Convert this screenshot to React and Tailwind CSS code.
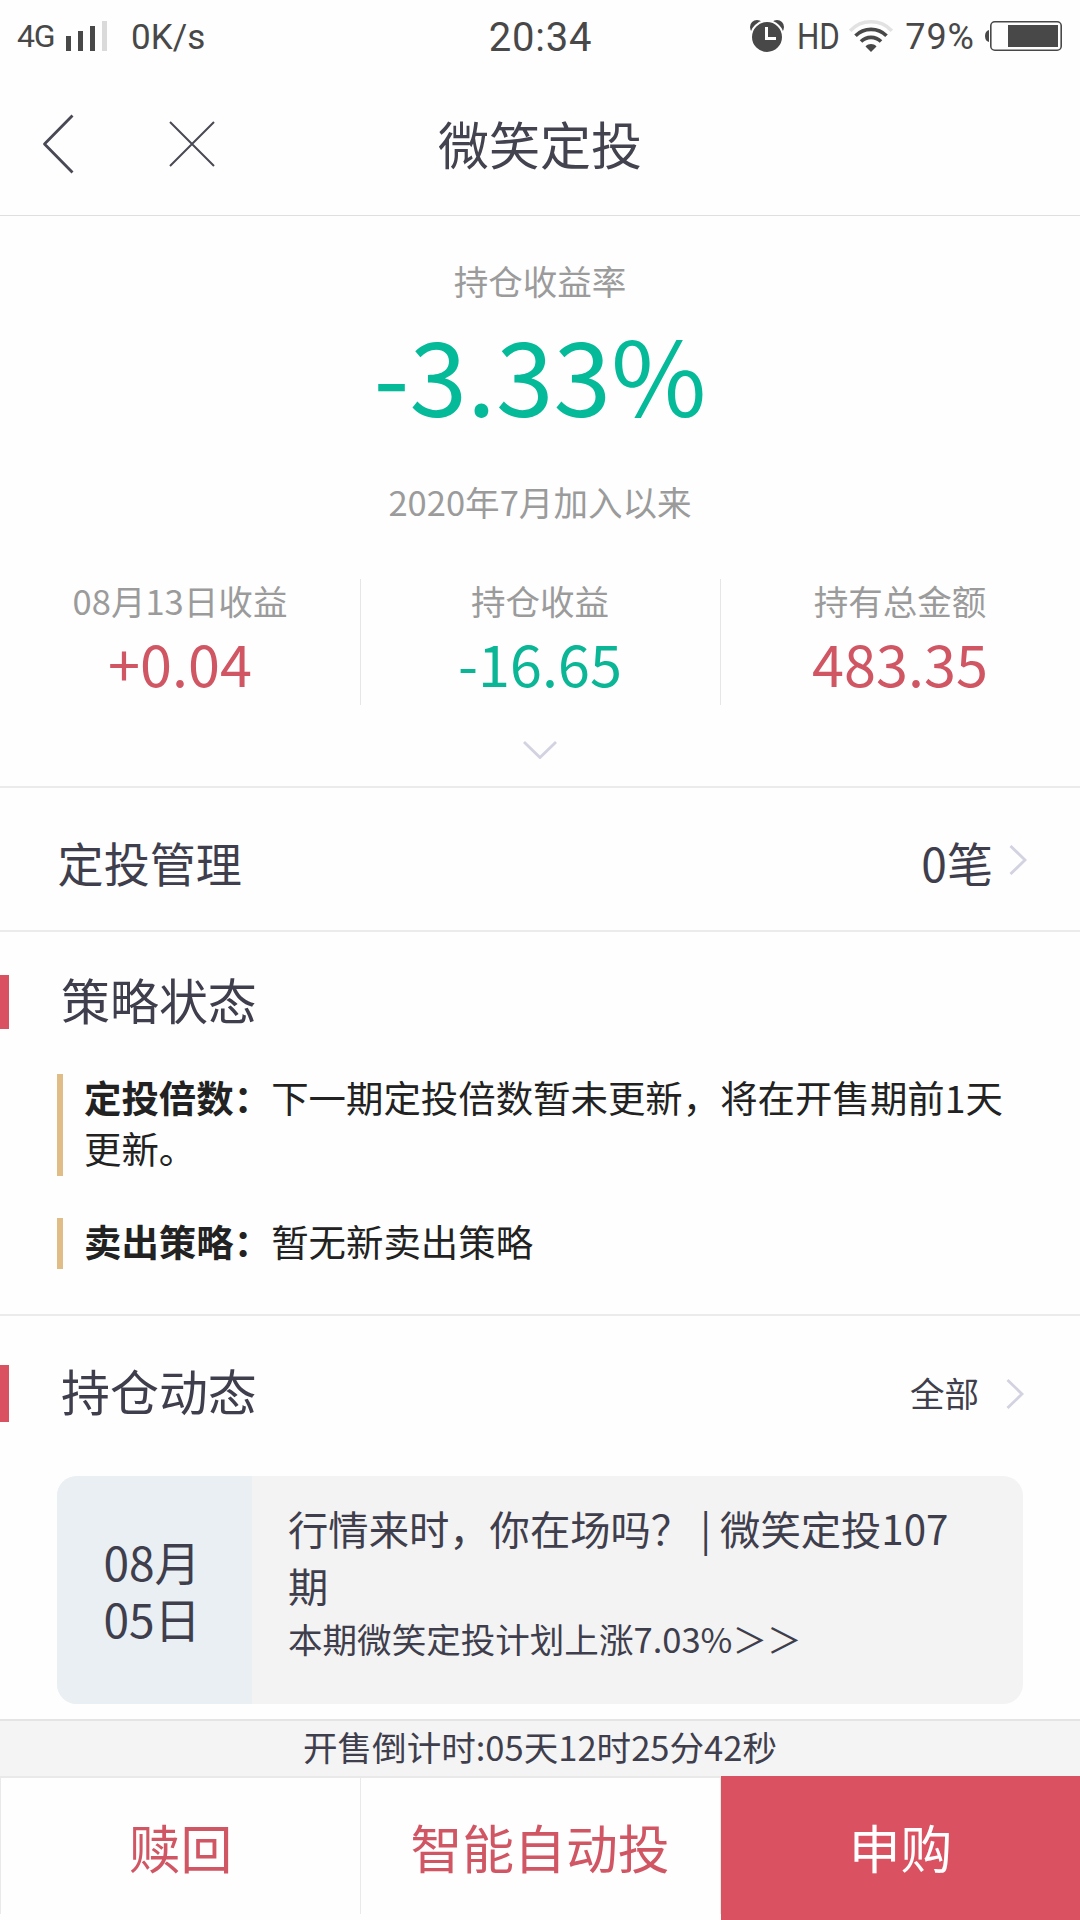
import React from 'react';

const stats = [
  { label: '08月13日收益', value: '+0.04', color: 'text-[#d15664]' },
  { label: '持仓收益', value: '-16.65', color: 'text-[#0ab696]' },
  { label: '持有总金额', value: '483.35', color: 'text-[#d15664]' },
];

const strategies = [
  { name: '定投倍数：', text: '下一期定投倍数暂未更新，将在开售期前1天更新。' },
  { name: '卖出策略：', text: '暂无新卖出策略' },
];

function AlarmIcon() {
  return (
    <svg width="34" height="32" viewBox="0 0 34 32" fill="none">
      <circle cx="7" cy="7" r="7" fill="#484848" />
      <circle cx="27" cy="7" r="7" fill="#484848" />
      <circle cx="17" cy="17" r="16" fill="#484848" stroke="#fefefe" strokeWidth="2" />
      <path d="M16.500 7V18.500H26" stroke="#fff" strokeWidth="3" />
    </svg>
  );
}

function WifiIcon() {
  return (
    <svg width="44" height="32" viewBox="0 0 44 32" fill="none" strokeWidth="3.600">
      <path d="M1.200 10.800C12.500 -1.200 31.500 -1.200 42.800 10.800" stroke="#e2e2e2" />
      <path d="M6.500 15.800C15 7.200 29 7.200 37.500 15.800" stroke="#484848" />
      <path d="M12 21.600C17.500 16 26.500 16 32 21.600" stroke="#484848" />
      <path d="M16.500 26.500C19.500 23.300 24.500 23.300 27.500 26.500L22 32Z" fill="#484848" />
    </svg>
  );
}

function BatteryIcon() {
  return (
    <svg width="77" height="30" viewBox="0 0 77 30" fill="none">
      <path d="M4 9V21C1.500 20.500 0 18.500 0 15C0 11.500 1.500 9.500 4 9Z" fill="#484848" />
      <rect x="5.800" y="0.800" width="70.400" height="28.400" rx="4" stroke="#484848" strokeWidth="1.600" />
      <rect x="23" y="4" width="50" height="22" fill="#484848" />
    </svg>
  );
}

function SignalIcon() {
  return (
    <div className="flex items-end gap-[7px] h-[30px] mb-0.5">
      <div className="w-[5px] h-[15px] bg-[#484848]" />
      <div className="w-[5px] h-5 bg-[#484848]" />
      <div className="w-[5px] h-[25px] bg-[#484848]" />
      <div className="w-[5px] h-[30px] bg-[#dadada]" />
    </div>
  );
}

function ChevronRight() {
  return (
    <svg width="18" height="30" viewBox="0 0 18 30" fill="none" stroke="#d2d2e0" strokeWidth="2.800">
      <path d="M1.500 1L16 15L1.500 29" />
    </svg>
  );
}

function StatusBar() {
  return (
    <div className="grid grid-cols-[1fr_auto_1fr] items-center h-[74px] shrink-0 text-[#484848] font-[Roboto,sans-serif] leading-none">
      <div className="flex items-center pl-[17px]">
        <span className="text-[32px] tracking-[-1.2px] w-[49px] pb-0.5">4G</span>
        <SignalIcon />
        <span className="text-[35px] ml-6 tracking-[0.1px] pt-px">0K/s</span>
      </div>
      <span className="text-[40px] tracking-[0.8px] pt-0.5 pl-px">20:34</span>
      <div className="flex items-center justify-end pr-[18px]">
        <div className="mb-0.5"><AlarmIcon /></div>
        <span className="text-[36px] ml-[13px] w-[44px] origin-left scale-x-[0.87]">HD</span>
        <div className="ml-2 mb-0.5"><WifiIcon /></div>
        <span className="text-[36px] tracking-[1px] ml-3 mr-2.5">79%</span>
        <div className="mb-0.5"><BatteryIcon /></div>
      </div>
    </div>
  );
}

function NavBar() {
  return (
    <div className="grid grid-cols-[1fr_auto_1fr] items-center h-[142px] shrink-0 pb-px border-b border-[#dfdfdf]">
      <div className="flex items-center pl-[42px]">
        <svg width="32" height="60" viewBox="0 0 32 60" fill="none" stroke="#494955" strokeWidth="2.800" strokeLinejoin="round">
          <path d="M30.500 1.500L2.500 30L30.500 58.500" />
        </svg>
        <svg className="ml-[95px]" width="46" height="46" viewBox="0 0 46 46" fill="none" stroke="#494955" strokeWidth="2">
          <path d="M1 1L45 45M45 1L1 45" />
        </svg>
      </div>
      <h1 className="pb-0.5 text-[51px] leading-[60px] text-[#43434f]">微笑定投</h1>
    </div>
  );
}

export default function App() {
  return (
    <div className="flex flex-col w-[1080px] h-[1920px] overflow-hidden bg-[#fefefe] text-[#3f3e4d] font-['Noto_Sans_CJK_SC',sans-serif]">
      <StatusBar />
      <NavBar />

      <main className="flex-1 min-h-0">
        <section className="flex flex-col items-center h-[570px] pt-[42px]">
          <div className="text-[34.56px] leading-[44px] text-[#9b9b9b]">持仓收益率</div>
          <div className="mt-2.5 text-[103.68px] leading-[120px] text-[#04ba99]">-3.33%</div>
          <div className="mt-[47px] text-[34.56px] leading-[44px] text-[#9b9b9b]">2020年7月加入以来</div>
          <div className="mt-14 grid grid-cols-[360px_360px_360px] w-full h-[126px]">
            {stats.map((s, i) => (
              <div key={s.label} className={`text-center ${i < 2 ? 'border-r border-[#e6e6e6] -mr-px' : ''}`}>
                <div className="text-[34.56px] leading-[42px] text-[#9b9b9b]">{s.label}</div>
                <div className="mt-1.5">
                  <div className={`text-[57.6px] leading-[70px] ${s.color}`}>{s.value}</div>
                </div>
              </div>
            ))}
          </div>
          <svg className="mt-[36px]" width="34" height="18" viewBox="0 0 34 18" fill="none" stroke="#d2d2e0" strokeWidth="2.800">
            <path d="M1 1L17 16.500L33 1" />
          </svg>
        </section>

        <section className="flex items-center justify-between h-[144px] pl-[57.6px] pr-[53px] border-t-2 border-[#ebebeb]">
          <span className="pt-1.5 text-[46.08px] leading-[60px]">定投管理</span>
          <div className="flex items-center gap-4">
            <span className="pt-1.5 text-[46.08px] leading-[60px]">0笔</span>
            <div className="pt-0.5"><ChevronRight /></div>
          </div>
        </section>

        <section className="h-[384px] pt-[43px] border-t-2 border-[#ebebeb]">
          <div className="flex h-[54px]">
            <div className="w-[9px] bg-[#da5261]" />
            <h2 className="ml-[52px] text-[48.96px] leading-[48px]">策略状态</h2>
          </div>
          <div className="flex flex-col gap-[42px] mt-[45px] pl-[57px] pr-[60px] text-[37.44px] leading-[51px] text-[#222]">
            {strategies.map(s => (
              <div key={s.name} className="flex">
                <div className="w-1.5 shrink-0 bg-[#e0bc86]" />
                <p className="ml-[21px] -mt-0.5 mb-0.5">
                  <b className="font-bold">{s.name}</b>{s.text}
                </p>
              </div>
            ))}
          </div>
        </section>

        <section className="pt-[49px] border-t-2 border-[#ebebeb]">
          <div className="flex h-[57px] pr-[56px]">
            <div className="w-[9px] bg-[#da5261]" />
            <h2 className="ml-[52px] text-[48.96px] leading-[49px]">持仓动态</h2>
            <div className="flex items-center gap-[27px] ml-auto">
              <span className="pb-[3px] text-[34.56px] leading-[44px]">全部</span>
              <ChevronRight />
            </div>
          </div>
          <div className="flex w-[966px] h-[228px] mt-[54px] ml-[57px] rounded-[20px] overflow-hidden bg-[#f3f3f3]">
            <div className="flex flex-col items-center justify-center w-[195px] pr-[5px] shrink-0 bg-[#e9eff3] text-[46.08px] leading-[57px]">
              <span>08月</span>
              <span>05日</span>
            </div>
            <div className="pt-[23px] pl-9 pr-10">
              <div className="text-[40.32px] leading-[57px]">行情来时，你在场吗？ | 微笑定投107期</div>
              <div className="text-[34.56px] leading-[50px]">本期微笑定投计划上涨7.03%＞＞</div>
            </div>
          </div>
        </section>
      </main>

      <footer className="shrink-0">
        <div className="flex items-center justify-center h-[57px] pb-[5px] border-t-2 border-[#e4e4e4] bg-[#f4f4f4] text-[34.56px] leading-[44px]">
          开售倒计时:05天12时25分42秒
        </div>
        <div className="flex h-36 text-[51.84px] leading-[60px] text-[#d15664]">
          <div className="flex items-center justify-center w-[361px] h-[138px] pt-0.5 border-t-2 border-x border-[#e9e9e9]">赎回</div>
          <div className="flex items-center justify-center w-[360px] h-[138px] pt-0.5 pr-px border-t-2 border-r border-[#e9e9e9]">智能自动投</div>
          <div className="flex items-center justify-center flex-1 pb-[3px] bg-[#da5261] text-white">申购</div>
        </div>
      </footer>
    </div>
  );
}
